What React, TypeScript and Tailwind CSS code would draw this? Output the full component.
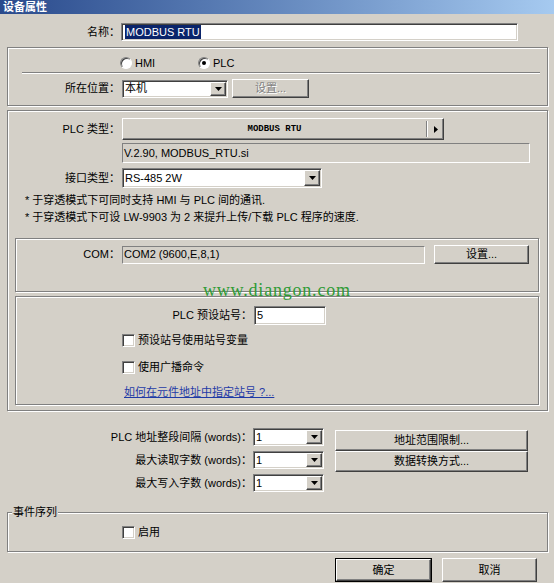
import React from "react";

const sunken =
  "border border-t-[#808080] border-l-[#808080] border-b-white border-r-white shadow-[inset_1px_1px_0_#404040,inset_-1px_-1px_0_#d4d0c8]";
const raised =
  "border border-t-white border-l-white border-b-[#404040] border-r-[#404040] shadow-[inset_-1px_-1px_0_#808080,inset_1px_1px_0_#d4d0c8]";
const etched =
  "border border-[#808080] shadow-[inset_1px_1px_0_#fff,1px_1px_0_#fff]";

function Arrow() {
  return (
    <svg width="7" height="4" viewBox="0 0 7 4">
      <path d="M0 0h7L3.5 4z" fill="#000" />
    </svg>
  );
}

function Select({ className, value }: { className: string; value: string }) {
  return (
    <div className={`${sunken} ${className} bg-white flex items-stretch p-[1px]`}>
      <div className="flex-1 flex items-center pl-[1px] whitespace-nowrap overflow-hidden">{value}</div>
      <div className={`${raised} w-[16px] bg-[#d4d0c8] flex items-center justify-center`}>
        <Arrow />
      </div>
    </div>
  );
}

function Radio({ checked }: { checked?: boolean }) {
  return (
    <span className="relative inline-block w-[12px] h-[12px] rounded-full bg-white border border-t-[#808080] border-l-[#808080] border-b-white border-r-white shadow-[inset_1px_1px_0_#404040]">
      {checked && <span className="absolute left-[3px] top-[3px] w-[4px] h-[4px] rounded-full bg-black" />}
    </span>
  );
}

function Check() {
  return <span className={`${sunken} inline-block w-[13px] h-[13px] bg-white`} />;
}

function Btn({ className, children }: { className: string; children: React.ReactNode }) {
  return (
    <div className={`${raised} ${className} bg-[#d4d0c8] flex items-center justify-center whitespace-nowrap`}>
      {children}
    </div>
  );
}

export default function App() {
  return (
    <div className="relative w-[554px] h-[583px] overflow-hidden bg-[#d4d0c8] text-[11px] leading-none text-black font-['Liberation_Sans','Noto_Sans_CJK_SC',sans-serif]">
      {/* title bar */}
      <div className="h-[14px] bg-linear-to-r from-[#2a4a8c] to-[#a6caf0] pl-[3px] text-white font-bold text-[11px] leading-[14px]">
        设备属性
      </div>

      {/* name */}
      <div className="mt-[9px] flex h-[18px] items-center">
        <div className="w-[121px] pr-[1px] text-right">名称：</div>
        <div className={`${sunken} w-[397px] h-[18px] bg-white flex items-center pl-[3px]`}>
          <span className="bg-[#0a246a] text-white px-[1px] leading-[14px]">MODBUS RTU</span>
        </div>
      </div>

      {/* group 1 */}
      <div className={`${etched} ml-[7px] mt-[6px] w-[541px] h-[59px]`}>
        <div className="mt-[8px] flex h-[14px] items-center">
          <div className="ml-[112px] w-[78px] flex items-center">
            <Radio />
            <span className="ml-[3px]">HMI</span>
          </div>
          <div className="flex items-center">
            <Radio checked />
            <span className="ml-[3px]">PLC</span>
          </div>
        </div>
        <div className="ml-[14px] mt-[2px] w-[518px] h-[2px] border-t border-t-[#808080] border-b border-b-white" />
        <div className="mt-[5px] flex h-[19px] items-center">
          <div className="w-[112px] text-right">所在位置：</div>
          <Select className="ml-[2px] w-[106px] h-[18px]" value="本机" />
          <Btn className="ml-[4px] w-[77px] h-[19px] text-[#808080] [text-shadow:1px_1px_0_#fff]">设置...</Btn>
        </div>
      </div>

      {/* group 2 */}
      <div className={`${etched} ml-[7px] mt-[4px] w-[541px] h-[301px]`}>
        <div className="mt-[7px] flex h-[22px] items-center">
          <div className="w-[114px] pr-[2px] text-right">PLC 类型：</div>
          <div className={`${raised} w-[322px] h-[22px] bg-[#d4d0c8] flex items-stretch`}>
            <div className="flex-1 flex items-center justify-center font-['Liberation_Mono',monospace] text-[9px] font-bold">
              MODBUS RTU
            </div>
            <div className="w-[2px] my-[2px] border-l border-l-[#808080] border-r border-r-white" />
            <div className="w-[15px] flex items-center justify-center">
              <svg width="4" height="7" viewBox="0 0 4 7">
                <path d="M0 0v7L4 3.5z" fill="#000" />
              </svg>
            </div>
          </div>
        </div>
        <div className="ml-[114px] mt-[3px] w-[408px] h-[20px] border border-t-[#808080] border-l-[#808080] border-b-white border-r-white flex items-center pl-[1px]">
          V.2.90, MODBUS_RTU.si
        </div>
        <div className="mt-[5px] flex h-[20px] items-center">
          <div className="w-[114px] pr-[2px] text-right">接口类型：</div>
          <Select className="w-[200px] h-[20px]" value="RS-485 2W" />
        </div>
        <div className="mt-[4px] pl-[17px] leading-[17px]">
          <div>* 于穿透模式下可同时支持 HMI 与 PLC 间的通讯.</div>
          <div>* 于穿透模式下可设 LW-9903 为 2 来提升上传/下载 PLC 程序的速度.</div>
        </div>

        {/* COM */}
        <div className={`${etched} ml-[7px] mt-[12px] w-[524px] h-[54px]`}>
          <div className="mt-[6px] flex h-[19px] items-center">
            <div className="w-[106px] pr-[2px] text-right">COM：</div>
            <div className="w-[303px] h-[18px] border border-t-[#808080] border-l-[#808080] border-b-white border-r-white flex items-center pl-[1px]">
              COM2 (9600,E,8,1)
            </div>
            <Btn className="ml-[9px] w-[95px] h-[19px]">设置...</Btn>
          </div>
        </div>

        {/* station */}
        <div className={`${etched} ml-[7px] mt-[4px] w-[524px] h-[109px]`}>
          <div className="mt-[9px] flex h-[19px] items-center">
            <div className="w-[238px] pr-[2px] text-right">PLC 预设站号：</div>
            <div className={`${sunken} w-[72px] h-[19px] bg-white flex items-center pl-[2px]`}>5</div>
          </div>
          <div className="mt-[9px] ml-[106px] flex h-[13px] items-center">
            <Check />
            <span className="ml-[3px]">预设站号使用站号变量</span>
          </div>
          <div className="mt-[14px] ml-[106px] flex h-[13px] items-center">
            <Check />
            <span className="ml-[3px]">使用广播命令</span>
          </div>
          <div className="mt-[11px] ml-[108px] h-[14px] flex items-center">
            <span className="text-[#1f3aa6] underline">如何在元件地址中指定站号 ?...</span>
          </div>
        </div>
      </div>

      {/* bottom settings */}
      <div className="flex h-[101px]">
        <div className="pt-[17px] flex flex-col gap-[5px]">
          <div className="flex h-[18px] items-center">
            <div className="w-[253px] pr-[1px] text-right">PLC 地址整段间隔 (words)：</div>
            <Select className="w-[71px] h-[18px]" value="1" />
          </div>
          <div className="flex h-[18px] items-center">
            <div className="w-[253px] pr-[1px] text-right">最大读取字数 (words)：</div>
            <Select className="w-[71px] h-[18px]" value="1" />
          </div>
          <div className="flex h-[18px] items-center">
            <div className="w-[253px] pr-[1px] text-right">最大写入字数 (words)：</div>
            <Select className="w-[71px] h-[18px]" value="1" />
          </div>
        </div>
        <div className="ml-[11px] pt-[19px] flex flex-col">
          <Btn className="w-[193px] h-[21px]">地址范围限制...</Btn>
          <Btn className="w-[193px] h-[21px]">数据转换方式...</Btn>
        </div>
      </div>

      {/* event group */}
      <div className={`${etched} relative ml-[7px] w-[541px] h-[40px]`}>
        <span className="absolute left-[4px] top-[-7px] px-[1px] bg-[#d4d0c8] leading-[13px]">事件序列</span>
        <div className="mt-[13px] ml-[114px] flex h-[13px] items-center">
          <Check />
          <span className="ml-[3px]">启用</span>
        </div>
      </div>

      {/* OK / Cancel */}
      <div className="mt-[6px] ml-[335px] flex">
        <div className="border border-black">
          <Btn className="w-[95px] h-[22px]">确定</Btn>
        </div>
        <Btn className="ml-[10px] w-[95px] h-[24px]">取消</Btn>
      </div>

      {/* watermark */}
      <div className="absolute left-[203px] top-[281px] text-[18px] leading-[18px] tracking-[0.8px] text-[#2e9b35] font-['Liberation_Serif',serif]">
        www.diangon.com
      </div>
    </div>
  );
}
